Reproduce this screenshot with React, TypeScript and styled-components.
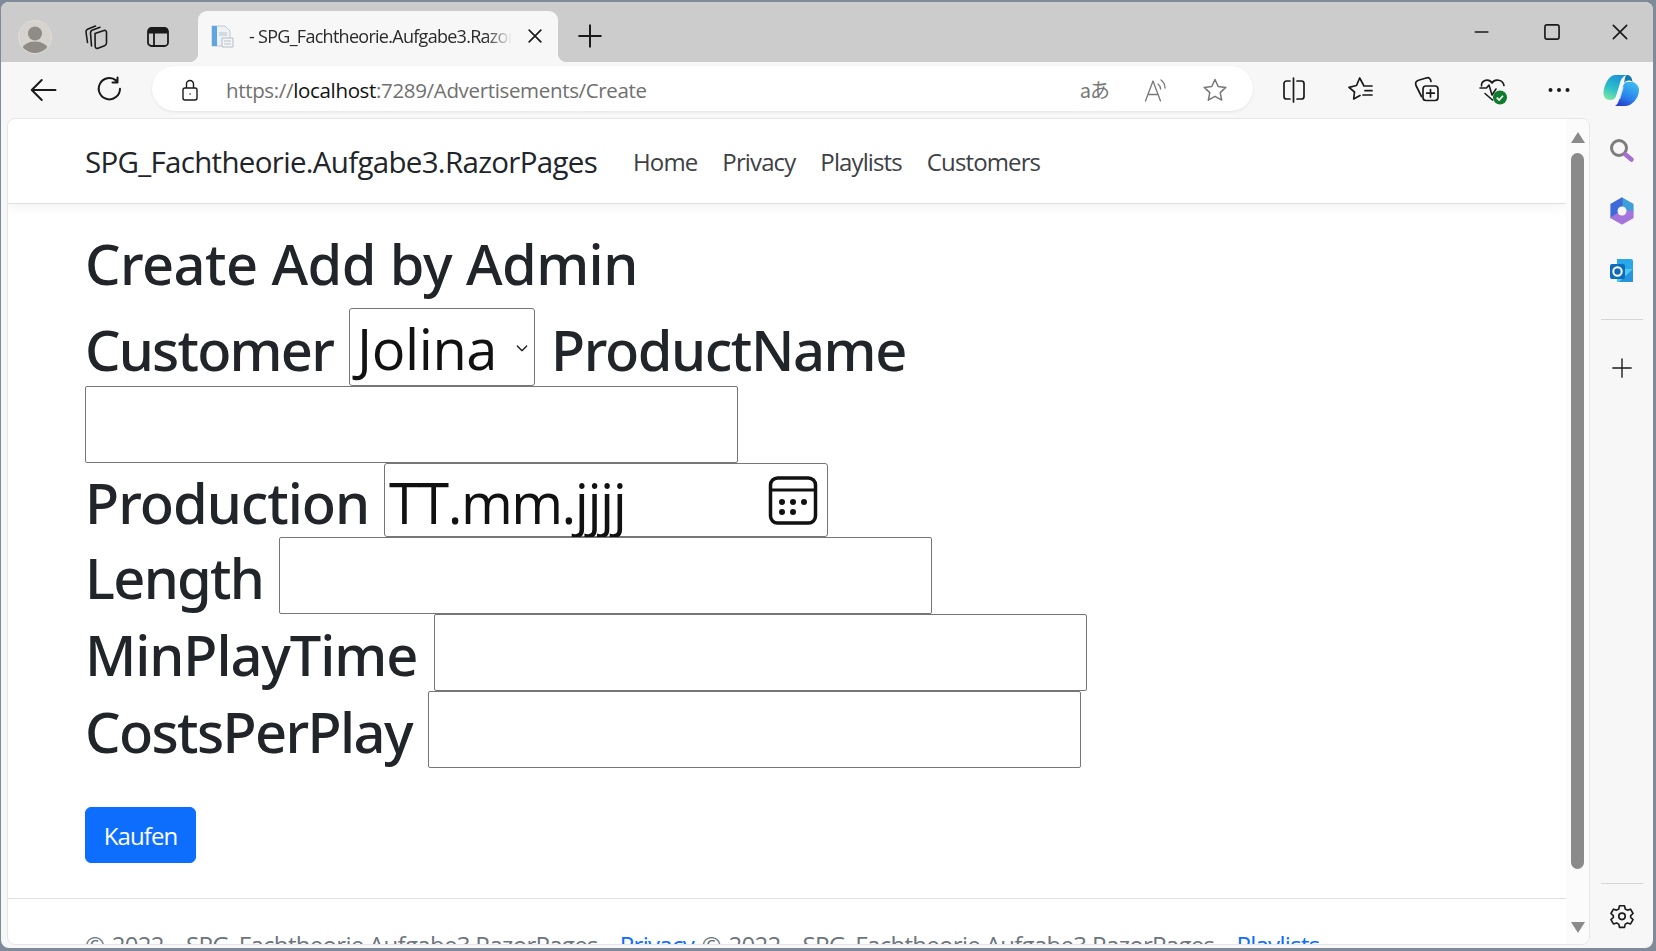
import React from 'react'
import styled, { createGlobalStyle } from 'styled-components'

const Global = createGlobalStyle`
  html, body { margin: 0; padding: 0; background: #7f8b99; }
  * { box-sizing: border-box; }
  body { font-family: "Open Sans", "Noto Sans", "Liberation Sans", sans-serif; overflow: hidden; }
`

const Frame = styled('div')`
  background: #7f8b99;
  height: 951px;
  overflow: hidden;
  padding: 2px 3px 3px 1px;
  width: 1656px;
`

const Window = styled('div')`
  background: #f7f7f7;
  border-radius: 8px;
  display: flex;
  flex-direction: column;
  height: 100%;
  overflow: hidden;
`

const TitleBar = styled('div')`
  align-items: flex-end;
  background: #cccccc;
  display: flex;
  flex: none;
  height: 60px;
  padding-left: 3px;
`

const Slot = styled('div')<{ $w: number; $self?: number }>`
  align-items: center;
  display: flex;
  flex: none;
  height: ${(props) => props.$self ?? 60}px;
  justify-content: center;
  width: ${(props) => props.$w}px;
`

const Tab = styled('div')`
  align-items: center;
  background: #f7f7f7;
  border-radius: 9px 9px 0 0;
  display: flex;
  flex: none;
  height: 51px;
  margin-left: 6px;
  padding: 0 0 2px 12px;
  position: relative;
  width: 360px;
  &::before, &::after {
    bottom: 0;
    content: '';
    height: 9px;
    position: absolute;
    width: 9px;
  }
  &::before {
    background: radial-gradient(circle at 0 0, #cccccc 9px, #f7f7f7 9.5px);
    left: -9px;
  }
  &::after {
    background: radial-gradient(circle at 100% 0, #cccccc 9px, #f7f7f7 9.5px);
    right: -9px;
  }
`

const TabText = styled('span')`
  color: #2a2a2a;
  flex: 1;
  font-size: 18px;
  letter-spacing: -0.72px;
  margin-left: 15px;
  -webkit-mask-image: linear-gradient(90deg, #000 90%, transparent 100%);
  mask-image: linear-gradient(90deg, #000 90%, transparent 100%);
  overflow: hidden;
  white-space: nowrap;
`

const Spacer = styled('div')`
  flex: 1;
`

const Toolbar = styled('div')`
  align-items: center;
  display: flex;
  flex: none;
  height: 56px;
  padding-left: 9px;
`

const Address = styled('div')`
  align-items: center;
  background: #fff;
  border-radius: 23px;
  box-shadow: 0 1px 3px rgba(0, 0, 0, 0.08);
  display: flex;
  flex: none;
  height: 45px;
  margin: 0 8px 4px 8px;
  padding: 3px 13px 0 26px;
  width: 1101px;
`

const Url = styled('div')`
  color: #707070;
  flex: 1;
  font-size: 20.5px;
  letter-spacing: -0.34px;
  margin-left: 24px;
  white-space: nowrap;
  b { color: #111; font-weight: 400; }
`

const TranslateGlyph = styled('span')`
  color: #777;
  font-family: "Noto Sans CJK JP", "Open Sans", sans-serif;
  font-size: 20px;
  letter-spacing: -1px;
  line-height: 1;
`

const Body = styled('div')`
  display: flex;
  flex: 1;
  min-height: 0;
  padding-left: 6px;
`

const Page = styled('div')`
  background: #fff;
  border: 1px solid #e6e6e6;
  border-radius: 8px;
  display: flex;
  flex: none;
  height: 827px;
  overflow: hidden;
  width: 1583px;
`

const Scroller = styled('div')`
  flex: 1;
  min-width: 0;
  overflow: hidden;
`

const Navbar = styled('nav')`
  align-items: center;
  border-bottom: 1px solid #dfdfdf;
  box-shadow: 0 4px 12px rgba(0, 0, 0, 0.05);
  display: flex;
  height: 85px;
  padding-left: 77px;
`

const Brand = styled('span')`
  color: #212529;
  font-size: 29.5px;
  letter-spacing: -0.69px;
  margin-right: 36px;
  white-space: nowrap;
`

const NavLink = styled('span')`
  color: #3d4145;
  font-size: 24px;
  letter-spacing: -0.88px;
  margin-right: 25px;
`

const Main = styled('main')`
  padding: 25px 0 0 77px;
`

const Heading = styled('h1')`
  color: #212529;
  font-family: "Noto Sans", "Open Sans", sans-serif;
  font-size: 56px;
  font-weight: 500;
  letter-spacing: -0.57px;
  line-height: 68px;
  margin: 0 0 11px;
  white-space: nowrap;
`

const Row = styled('div')<{ $h: number }>`
  align-items: center;
  display: flex;
  gap: 16px;
  height: ${(props) => props.$h}px;
`

const Label = styled('label')<{ $w?: number; $ls: number }>`
  color: #212529;
  flex: none;
  font-family: "Noto Sans", "Open Sans", sans-serif;
  font-size: 56px;
  font-weight: 500;
  letter-spacing: ${(props) => props.$ls}px;
  padding-top: 3px;
  white-space: nowrap;
  width: ${(props) => (props.$w ? `${props.$w}px` : 'auto')};
`

const TextInput = styled('div')<{ $h?: number }>`
  background: #fff;
  border: 1px solid #767676;
  border-radius: 2px;
  flex: none;
  height: ${(props) => props.$h ?? 77}px;
  width: 653px;
`

const SelectBox = styled('div')`
  align-items: center;
  background: #fff;
  border: 1px solid #767676;
  border-radius: 3px;
  color: #111;
  display: flex;
  flex: none;
  font-size: 56px;
  height: 78px;
  justify-content: space-between;
  letter-spacing: -0.4px;
  padding: 2px 4px 0 7px;
  width: 186px;
`

const DateBox = styled('div')`
  align-items: center;
  background: #fff;
  border: 1px solid #767676;
  border-radius: 3px;
  color: #111;
  display: flex;
  flex: none;
  font-size: 56px;
  height: 74px;
  justify-content: space-between;
  letter-spacing: -1.5px;
  line-height: 76px;
  padding: 0 9px 0 4px;
  width: 444px;
`

const DateText = styled('span')`
  padding-top: 4px;
`

const BuyButton = styled('button')`
  background: #0d6efd;
  border: 1px solid #0d6efd;
  border-radius: 6px;
  color: #fff;
  display: block;
  font-family: inherit;
  font-size: 24px;
  height: 56px;
  letter-spacing: -0.9px;
  margin-top: 39px;
  padding: 0;
  width: 111px;
`

const Footer = styled('footer')`
  border-top: 1px solid #dfdfdf;
  color: #6c757d;
  font-size: 24px;
  letter-spacing: -0.7px;
  line-height: 32px;
  margin-top: 35px;
  padding: 30px 0 0 77px;
  white-space: nowrap;
  word-spacing: 2px;
  a { color: #0d6efd; text-decoration: underline; }
`

const ScrollTrack = styled('div')`
  align-items: center;
  background: #fbfbfb;
  display: flex;
  flex: none;
  flex-direction: column;
  padding-top: 13px;
  width: 23px;
`

const Thumb = styled('div')`
  background: #8a8a8a;
  border-radius: 7px;
  flex: none;
  height: 716px;
  margin: 10px 0 53px;
  width: 13px;
`

const SideBar = styled('aside')`
  align-items: center;
  display: flex;
  flex: 1;
  flex-direction: column;
  padding-top: 3px;
`

const SideSlot = styled('div')<{ $top?: number }>`
  align-items: center;
  display: flex;
  flex: none;
  height: 60px;
  justify-content: center;
  margin-top: ${(props) => props.$top ?? 0}px;
  width: 100%;
`

const Divider = styled('div')<{ $top?: number }>`
  background: #d6d6d6;
  flex: none;
  height: 1px;
  margin-top: ${(props) => props.$top ?? 0}px;
  width: 42px;
`

const Stroke = { fill: 'none', stroke: 'currentColor', strokeLinecap: 'round', strokeLinejoin: 'round' } as const

const Icon = styled('svg')<{ $c?: string }>`
  color: ${(props) => props.$c ?? '#1a1a1a'};
  display: block;
  flex: none;
`

const Avatar = () => (
  <svg width="34" height="34" viewBox="0 0 34 34">
    <defs>
      <clipPath id="avClip"><circle cx="17" cy="17" r="16" /></clipPath>
    </defs>
    <circle cx="17" cy="17" r="16.5" fill="#d6d3ce" stroke="#dedbd6" />
    <g clipPath="url(#avClip)">
      <circle cx="17" cy="13.500" r="7" fill="#8f8b86" />
      <ellipse cx="17" cy="30" rx="13" ry="8.500" fill="#8f8b86" />
    </g>
  </svg>
)

const CollectionsTab = () => (
  <Icon width="26" height="26" viewBox="0 0 26 26">
    <g {...Stroke} strokeWidth="1.600">
      <path d="M13 9.500 22 6.500Q24.500 6 24.500 8.500V19Q24.500 21 22.500 21.700L16 24.200Q13.500 25 13.200 22.500Z" />
      <path d="M9.500 22 8.500 9Q8.400 7 10 6.300L18 3.300" />
      <path d="M5.500 18.500 4 8Q3.800 6 5.500 5.200L13.500 2" />
    </g>
  </Icon>
)

const VerticalTabs = () => (
  <Icon width="24" height="24" viewBox="0 0 24 24">
    <rect x="2" y="3" width="20" height="18" rx="3.500" {...Stroke} strokeWidth="1.800" />
    <path d="M4 3h16a2 2 0 0 1 2 2v3.500H2V5a2 2 0 0 1 2-2z" fill="currentColor" />
    <path d="M8 8v12" {...Stroke} strokeWidth="1.800" />
  </Icon>
)

const Favicon = () => (
  <svg width="24" height="24" viewBox="0 0 24 24">
    <path d="M2 2h13l5 5v15H2z" fill="#eef1f5" stroke="#c3cad3" />
    <path d="M2 2h5v20H2z" fill="#5ea6df" />
    <path d="M9 8h8v4H9z" fill="#d4dae1" />
    <path d="M12 14h11v9H12z" fill="#f4f6f8" stroke="#b5bdc7" />
    <path d="M14 17h7M14 20h7" stroke="#b5bdc7" />
  </svg>
)

const Line = ({ d, size = 24, w = 1.7 }: { d: string; size?: number; w?: number }) => (
  <Icon width={size} height={size} viewBox="0 0 24 24">
    <path d={d} {...Stroke} strokeWidth={w} />
  </Icon>
)

const ReadAloud = () => (
  <Icon $c="#777" width="26" height="26" viewBox="0 0 26 26">
    <g {...Stroke} strokeWidth="1.300">
      <path d="M2.500 24 10 4l7.500 20M5.200 17.500h9.600" />
      <path d="M15 7c1.700 1.200 2.500 2.800 2.600 5" />
      <path d="M18 3c2.700 2 4 4.800 4 8" />
    </g>
  </Icon>
)

const StarOutline = ({ c }: { c?: string }) => (
  <Icon $c={c} width="26" height="26" viewBox="0 0 26 26">
    <path d="M13 2.500l3.200 7 7.600.9-5.600 5.200 1.500 7.500L13 19.300l-6.700 3.800 1.500-7.500L2.200 10.400l7.600-.9z" {...Stroke} strokeWidth="1.500" />
  </Icon>
)

const SplitScreen = () => (
  <Icon width="24" height="28" viewBox="0 0 24 28">
    <g {...Stroke} strokeWidth="1.700">
      <path d="M8 5H4.500A2.500 2.500 0 0 0 2 7.500v13A2.500 2.500 0 0 0 4.500 23H8" />
      <path d="M15 5h4.500A2.500 2.500 0 0 1 22 7.500v13a2.500 2.500 0 0 1-2.500 2.500H15" />
      <path d="M11.500 2v24" />
    </g>
  </Icon>
)

const Favorites = () => (
  <Icon width="28" height="28" viewBox="0 0 28 28">
    <g {...Stroke} strokeWidth="1.700">
      <path d="M17 10 12.700 2 9.500 9.500 2 11.300 7.500 16 6.700 23 13 19.500" />
      <path d="M18 10h7M18 14.700h7M16 19h9" />
    </g>
  </Icon>
)

const Collections = () => (
  <Icon width="28" height="28" viewBox="0 0 28 28">
    <g {...Stroke} strokeWidth="1.700">
      <path d="M8.500 20.500 3 9.500C2 7 3 5 5.500 4.200L14 1.800c2-.4 3.500.6 4 3.700" />
      <rect x="10" y="10" width="15" height="14.500" rx="3" />
      <path d="M17.500 13.500v7.500M13.700 17.200h7.600" />
    </g>
  </Icon>
)

const Health = () => (
  <Icon width="30" height="30" viewBox="0 -3 30 30">
    <g {...Stroke} strokeWidth="1.600">
      <path d="M2.500 8C2 2 10 0 13 5c3-5 11-3 12 2.500" />
      <path d="M1 10h6.500L10 7l3 10 4-6" />
      <path d="M6 15.500 13.500 22" />
    </g>
    <circle cx="21" cy="19.500" r="7" fill="#107c2e" />
    <path d="M17.800 19.700l2.300 2.300 3.900-4.300" fill="none" stroke="#fff" strokeWidth="1.700" />
  </Icon>
)

const Dots = () => (
  <Icon width="22" height="6" viewBox="0 0 22 6">
    <circle cx="2.500" cy="3" r="2" fill="currentColor" />
    <circle cx="11" cy="3" r="2" fill="currentColor" />
    <circle cx="19.500" cy="3" r="2" fill="currentColor" />
  </Icon>
)

const Copilot = () => (
  <svg width="36" height="32" viewBox="0 0 36 32">
    <defs>
      <linearGradient id="cpA" x1="0.6" y1="0" x2="0.2" y2="1">
        <stop offset="0" stopColor="#1b93d8" />
        <stop offset="0.55" stopColor="#2cc0c8" />
        <stop offset="1" stopColor="#7fe8a0" />
      </linearGradient>
      <linearGradient id="cpB" x1="0.7" y1="0.1" x2="0.3" y2="1">
        <stop offset="0" stopColor="#3bb4f0" />
        <stop offset="0.6" stopColor="#2a80ea" />
        <stop offset="1" stopColor="#2a3fd0" />
      </linearGradient>
    </defs>
    <path d="M12 32h10c7 0 14-8 14-16 0-4-3-7-6.500-8H24c-2 0-3 2-4 4l-4 14c-1 3-2 5-4 6z" fill="url(#cpB)" />
    <path d="M24 1c3 0 5 2 5.500 7-2.500-2-6-2-8.500 1l1-5c.3-1.500 1-3 2-3z" fill="#0f7ab0" />
    <path d="M12 1h12c-4 1-6 4-7 8l-4 13c-1 3-3 4-6 4-4 0-7-3-6.500-8C1 11 6 1 12 1z" fill="url(#cpA)" />
    <path d="M20 13 16.500 25" stroke="#dff8ff" strokeWidth="1.400" opacity="0.8" />
  </svg>
)

const Search = () => (
  <svg width="28" height="28" viewBox="0 0 28 28">
    <circle cx="11" cy="11" r="7.500" fill="none" stroke="#7d7d7d" strokeWidth="3" />
    <path d="M17.500 17.500l6 5" stroke="#a56fd1" strokeWidth="4.500" strokeLinecap="round" />
  </svg>
)

const M365 = () => (
  <svg width="26" height="28" viewBox="0 0 26 28">
    <path d="M13 1 24 7.300V14H13z" fill="#3fa0d8" stroke="#3fa0d8" strokeWidth="1.200" strokeLinejoin="round" />
    <path d="M13 1 2 7.300v13.400L13 14z" fill="#3d6ad8" stroke="#3d6ad8" strokeWidth="1.200" strokeLinejoin="round" />
    <path d="M2 20.700 13 27l11-6.300V14H13z" fill="#a474dc" stroke="#a474dc" strokeWidth="1.200" strokeLinejoin="round" />
    <circle cx="13" cy="14" r="4.500" fill="#f7f7f7" />
  </svg>
)

const Outlook = () => (
  <svg width="26" height="26" viewBox="0 0 26 26">
    <path d="M8 1h14a2 2 0 0 1 2 2v8H8z" fill="#28a8ea" />
    <path d="M8 11h16v13H8z" fill="#50c8f0" />
    <path d="M24 11v13H10z" fill="#0f78d4" opacity="0.65" />
    <rect x="1" y="6" width="15" height="15" rx="2" fill="#0f6cbd" />
    <circle cx="8.500" cy="13.500" r="4.200" fill="none" stroke="#fff" strokeWidth="2" />
  </svg>
)

const Gear = () => (
  <Icon width="26" height="26" viewBox="0 0 24 24">
    <g {...Stroke} strokeWidth="1.500">
      <path d="M9.700 2.500h4.600l.7 3 2 1.100 2.900-.9 2.300 4-2.200 2v1.600l2.200 2-2.300 4-2.900-.9-2 1.100-.7 3H9.700l-.7-3-2-1.100-2.900.9-2.300-4 2.200-2v-1.600l-2.200-2 2.300-4 2.900.9 2-1.100z" />
      <circle cx="12" cy="12.300" r="3" />
    </g>
  </Icon>
)

const Calendar = () => (
  <Icon $c="#111" width="50" height="50" viewBox="0 0 50 50">
    <rect x="2.500" y="3" width="45" height="45" rx="7" fill="none" stroke="currentColor" strokeWidth="3.500" />
    <path d="M3 15h44" stroke="currentColor" strokeWidth="3" />
    <circle cx="14" cy="27" r="3" fill="currentColor" />
    <circle cx="25" cy="27" r="3" fill="currentColor" />
    <circle cx="36" cy="27" r="3" fill="currentColor" />
    <circle cx="14" cy="37" r="3" fill="currentColor" />
    <circle cx="25" cy="37" r="3" fill="currentColor" />
  </Icon>
)

const Caret = styled('span')<{ $down?: boolean }>`
  border-left: 7.5px solid transparent;
  border-right: 7.5px solid transparent;
  ${(props) => (props.$down ? 'border-top: 11px solid #8a8a8a;' : 'border-bottom: 11px solid #8a8a8a;')}
  display: block;
  flex: none;
  height: 0;
  width: 0;
`

const SidePush = styled('div')`
  flex: none;
  height: 485px;
`

export default function App() {
  return (
    <Frame>
      <Global />
      <Window>
        <TitleBar>
          <Slot $w={62} $self={51}><Avatar /></Slot>
          <Slot $w={58} $self={51}><CollectionsTab /></Slot>
          <Slot $w={68} $self={51}><VerticalTabs /></Slot>
          <Tab>
            <Favicon />
            <TabText>- SPG_Fachtheorie.Aufgabe3.RazorPages</TabText>
            <Slot $w={46} $self={49}><Line size={20} w={2} d="M5 5l14 14M19 5L5 19" /></Slot>
          </Tab>
          <Slot $w={64} $self={53}><Line size={26} w={1.8} d="M12 2v20M2 12h20" /></Slot>
          <Spacer />
          <Slot $w={68}><Line size={20} w={2} d="M4 12h15" /></Slot>
          <Slot $w={71}><Line size={20} w={2} d="M6 3.500h12a2.500 2.500 0 0 1 2.500 2.500v12a2.500 2.500 0 0 1-2.500 2.500H6A2.500 2.500 0 0 1 3.500 18V6A2.500 2.500 0 0 1 6 3.500z" /></Slot>
          <Slot $w={66}><Line size={20} w={2} d="M4 4l16 16M20 4L4 20" /></Slot>
        </TitleBar>
        <Toolbar>
          <Slot $w={66} $self={52}><Line size={30} w={1.6} d="M3 12h19M3 12l8-8M3 12l8 8" /></Slot>
          <Slot $w={68} $self={52}><Line size={30} w={1.6} d="M20 11a8.500 8.500 0 1 1-3-6.500M18 2v4h-4" /></Slot>
          <Address>
            <Line size={24} w={1.400} d="M7 10h10a2 2 0 0 1 2 2v8a2 2 0 0 1-2 2H7a2 2 0 0 1-2-2v-8a2 2 0 0 1 2-2zM8.500 10V6a3.500 3.500 0 0 1 7 0v4M12 16h.1" />
            <Url>https://<b>localhost</b>:7289/Advertisements/Create</Url>
            <Slot $w={53} $self={42}><TranslateGlyph>aあ</TranslateGlyph></Slot>
            <Slot $w={69} $self={42}><ReadAloud /></Slot>
            <Slot $w={50} $self={42}><StarOutline c="#777" /></Slot>
          </Address>
          <Slot $w={66} $self={52}><SplitScreen /></Slot>
          <Slot $w={67} $self={52}><Favorites /></Slot>
          <Slot $w={66} $self={52}><Collections /></Slot>
          <Slot $w={67} $self={52}><Health /></Slot>
          <Slot $w={64} $self={52}><Dots /></Slot>
          <Slot $w={60} $self={52}><Copilot /></Slot>
        </Toolbar>
        <Body>
          <Page>
            <Scroller>
              <Navbar>
                <Brand>SPG_Fachtheorie.Aufgabe3.RazorPages</Brand>
                <NavLink>Home</NavLink>
                <NavLink>Privacy</NavLink>
                <NavLink>Playlists</NavLink>
                <NavLink>Customers</NavLink>
              </Navbar>
              <Main>
                <Heading>Create Add by Admin</Heading>
                <Row $h={78}>
                  <Label $w={248} $ls={-1.8}>Customer</Label>
                  <SelectBox>Jolina<Line size={16} w={2} d="M5 9l7 7 7-7" /></SelectBox>
                  <Label $ls={-1.4}>ProductName</Label>
                </Row>
                <Row $h={77}><TextInput /></Row>
                <Row $h={74}>
                  <Label $w={283} $ls={-1}>Production</Label>
                  <DateBox><DateText>TT.mm.jjjj</DateText><Calendar /></DateBox>
                </Row>
                <Row $h={77}><Label $w={178} $ls={-1.7}>Length</Label><TextInput /></Row>
                <Row $h={77}><Label $w={333} $ls={-1.1}>MinPlayTime</Label><TextInput /></Row>
                <Row $h={77}><Label $w={327} $ls={-1.64}>CostsPerPlay</Label><TextInput /></Row>
                <BuyButton>Kaufen</BuyButton>
              </Main>
              <Footer>
                © 2022 - SPG_Fachtheorie.Aufgabe3.RazorPages - <a>Privacy</a> © 2022 - SPG_Fachtheorie.Aufgabe3.RazorPages - <a>Playlists</a>
              </Footer>
            </Scroller>
            <ScrollTrack>
              <Caret />
              <Thumb />
              <Caret $down />
            </ScrollTrack>
          </Page>
          <SideBar>
            <SideSlot><Search /></SideSlot>
            <SideSlot><M365 /></SideSlot>
            <SideSlot><Outlook /></SideSlot>
            <Divider $top={18} />
            <SideSlot $top={18}><Line size={22} w={1.500} d="M12 2v20M2 12h20" /></SideSlot>
            <SidePush />
            <Divider />
            <SideSlot $top={2}><Gear /></SideSlot>
          </SideBar>
        </Body>
      </Window>
    </Frame>
  )
}
